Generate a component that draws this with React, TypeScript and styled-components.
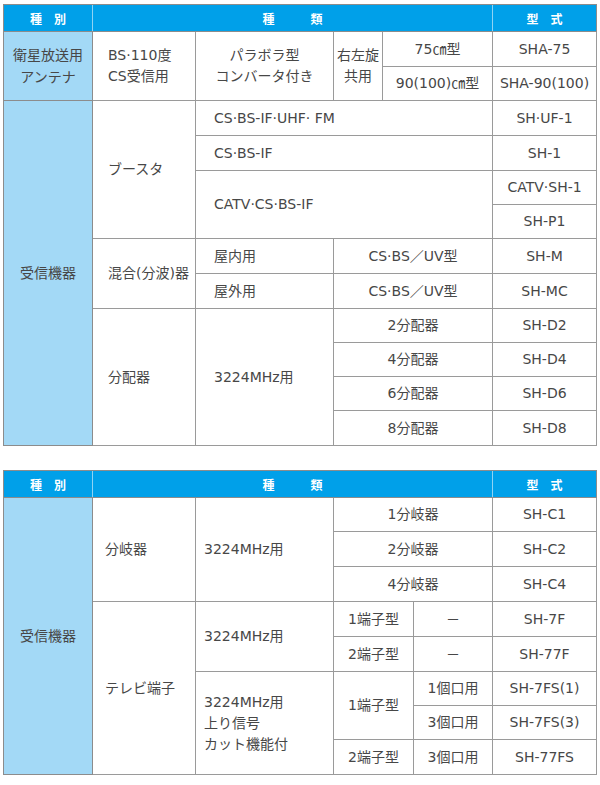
import React from "react";
import styled, { createGlobalStyle } from "styled-components";

const GlobalStyle = createGlobalStyle`
  body {
    margin: 0;
    padding: 4px 4px 0 3px;
    background: #ffffff;
    font-family: "DejaVu Sans", "Noto Sans CJK JP", sans-serif;
    color: #474747;
  }
`;

const Page = styled.div`
  display: flex;
  flex-direction: column;
  gap: 24px;
  width: 593px;
`;

const Table = styled.table`
  width: 593px;
  border-collapse: collapse;
  table-layout: fixed;
  border: 1px solid #8c8c8c;
  font-size: 14px;
`;

const HeadRow = styled.tr`
  height: 27px;
`;

const HeadCell = styled.th`
  background: #00a0e9;
  color: #ffffff;
  font-family: "Noto Sans CJK JP", sans-serif;
  font-size: 12px;
  font-weight: 700;
  text-align: center;
  padding: 0;
  border-top: 1px solid #8c8c8c;
  border-bottom: 1px solid #8c8c8c;
  border-left: 1px solid #8fd3f4;
  white-space: pre;
  &:first-child {
    border-left: 1px solid #8c8c8c;
  }
`;

const Row = styled.tr<{ $h?: number }>`
  height: ${(p) => p.$h ?? 34}px;
`;

const Category = styled.td`
  background: #a3d9f6;
  text-align: center;
  vertical-align: middle;
  border: 1px solid #8c8c8c;
  line-height: 22px;
  padding: 0;
`;

const Cell = styled.td<{ $align?: "left" | "center"; $pad?: number }>`
  text-align: ${(p) => p.$align ?? "center"};
  padding: 0 0 0 ${(p) => p.$pad ?? 0}px;
  vertical-align: middle;
  border: 1px solid #9a9a9a;
  line-height: 21px;
  white-space: nowrap;
`;

const Cols = ({ widths }: { widths: number[] }) => (
  <colgroup>
    {widths.map((w, i) => (
      <col key={i} style={{ width: w }} />
    ))}
  </colgroup>
);

const Lines = ({ text }: { text: string[] }) => (
  <>
    {text.map((t, i) => (
      <div key={i}>{t}</div>
    ))}
  </>
);

function Header() {
  return (
    <thead>
      <HeadRow>
        <HeadCell>種　別</HeadCell>
        <HeadCell colSpan={4}>種　　　類</HeadCell>
        <HeadCell>型　式</HeadCell>
      </HeadRow>
    </thead>
  );
}

function AntennaTable() {
  return (
    <Table>
      <Cols widths={[89, 103, 138, 49, 110, 104]} />
      <Header />
      <tbody>
        <Row $h={35}>
          <Category rowSpan={2}>
            <Lines text={["衛星放送用", "アンテナ"]} />
          </Category>
          <Cell rowSpan={2} $align="left" $pad={15}>
            <Lines text={["BS·110度", "CS受信用"]} />
          </Cell>
          <Cell rowSpan={2}>
            <Lines text={["パラボラ型", "コンバータ付き"]} />
          </Cell>
          <Cell rowSpan={2}>
            <Lines text={["右左旋", "共用"]} />
          </Cell>
          <Cell>75㎝型</Cell>
          <Cell>SHA-75</Cell>
        </Row>
        <Row>
          <Cell>90(100)㎝型</Cell>
          <Cell>SHA-90(100)</Cell>
        </Row>
        <Row $h={35}>
          <Category rowSpan={10}>受信機器</Category>
          <Cell rowSpan={4} $align="left" $pad={15}>
            ブースタ
          </Cell>
          <Cell colSpan={3} $align="left" $pad={18}>
            CS·BS-IF·UHF· FM
          </Cell>
          <Cell>SH·UF-1</Cell>
        </Row>
        <Row $h={35}>
          <Cell colSpan={3} $align="left" $pad={18}>
            CS·BS-IF
          </Cell>
          <Cell>SH-1</Cell>
        </Row>
        <Row>
          <Cell colSpan={3} rowSpan={2} $align="left" $pad={18}>
            CATV·CS·BS-IF
          </Cell>
          <Cell>CATV·SH-1</Cell>
        </Row>
        <Row>
          <Cell>SH-P1</Cell>
        </Row>
        <Row $h={35}>
          <Cell rowSpan={2} $align="left" $pad={15}>
            混合(分波)器
          </Cell>
          <Cell $align="left" $pad={18}>
            屋内用
          </Cell>
          <Cell colSpan={2}>CS·BS／UV型</Cell>
          <Cell>SH-M</Cell>
        </Row>
        <Row $h={35}>
          <Cell $align="left" $pad={18}>
            屋外用
          </Cell>
          <Cell colSpan={2}>CS·BS／UV型</Cell>
          <Cell>SH-MC</Cell>
        </Row>
        <Row>
          <Cell rowSpan={4} $align="left" $pad={15}>
            分配器
          </Cell>
          <Cell rowSpan={4} $align="left" $pad={18}>
            3224MHz用
          </Cell>
          <Cell colSpan={2}>2分配器</Cell>
          <Cell>SH-D2</Cell>
        </Row>
        <Row>
          <Cell colSpan={2}>4分配器</Cell>
          <Cell>SH-D4</Cell>
        </Row>
        <Row>
          <Cell colSpan={2}>6分配器</Cell>
          <Cell>SH-D6</Cell>
        </Row>
        <Row $h={35}>
          <Cell colSpan={2}>8分配器</Cell>
          <Cell>SH-D8</Cell>
        </Row>
      </tbody>
    </Table>
  );
}

function DeviceTable() {
  return (
    <Table>
      <Cols widths={[89, 103, 138, 80, 79, 104]} />
      <Header />
      <tbody>
        <Row>
          <Category rowSpan={8}>受信機器</Category>
          <Cell rowSpan={3} $align="left" $pad={12}>
            分岐器
          </Cell>
          <Cell rowSpan={3} $align="left" $pad={8}>
            3224MHz用
          </Cell>
          <Cell colSpan={2}>1分岐器</Cell>
          <Cell>SH-C1</Cell>
        </Row>
        <Row $h={35}>
          <Cell colSpan={2}>2分岐器</Cell>
          <Cell>SH-C2</Cell>
        </Row>
        <Row $h={35}>
          <Cell colSpan={2}>4分岐器</Cell>
          <Cell>SH-C4</Cell>
        </Row>
        <Row $h={35}>
          <Cell rowSpan={5} $align="left" $pad={12}>
            テレビ端子
          </Cell>
          <Cell rowSpan={2} $align="left" $pad={8}>
            3224MHz用
          </Cell>
          <Cell>1端子型</Cell>
          <Cell>－</Cell>
          <Cell>SH-7F</Cell>
        </Row>
        <Row $h={35}>
          <Cell>2端子型</Cell>
          <Cell>－</Cell>
          <Cell>SH-77F</Cell>
        </Row>
        <Row>
          <Cell rowSpan={3} $align="left" $pad={8}>
            <Lines text={["3224MHz用", "上り信号", "カット機能付"]} />
          </Cell>
          <Cell rowSpan={2}>1端子型</Cell>
          <Cell>1個口用</Cell>
          <Cell>SH-7FS(1)</Cell>
        </Row>
        <Row>
          <Cell>3個口用</Cell>
          <Cell>SH-7FS(3)</Cell>
        </Row>
        <Row $h={35}>
          <Cell>2端子型</Cell>
          <Cell>3個口用</Cell>
          <Cell>SH-77FS</Cell>
        </Row>
      </tbody>
    </Table>
  );
}

export default function App() {
  return (
    <>
      <GlobalStyle />
      <Page>
        <AntennaTable />
        <DeviceTable />
      </Page>
    </>
  );
}
